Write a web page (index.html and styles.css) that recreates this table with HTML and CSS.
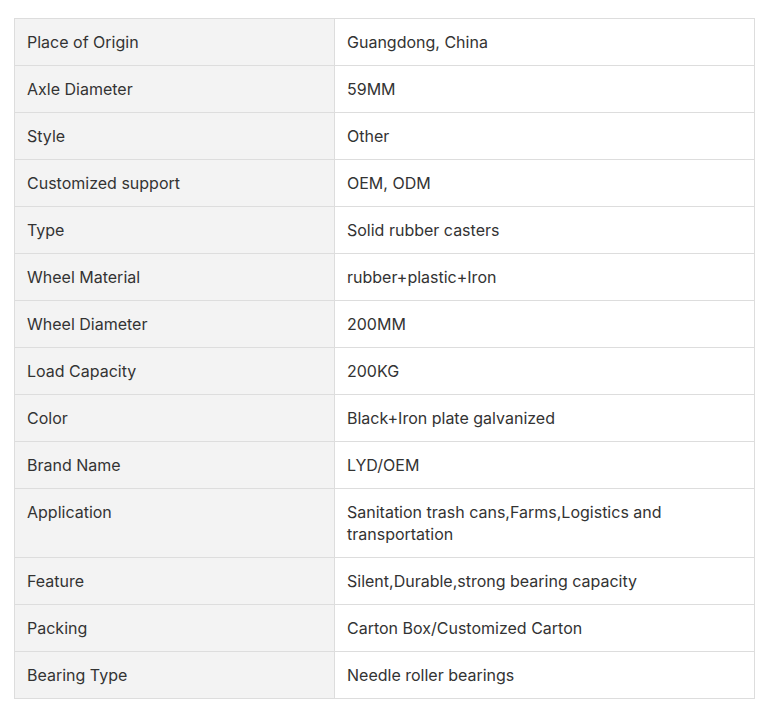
FILE: index.html
```html
<!DOCTYPE html>
<html>
<head>
<meta charset="utf-8">
<link rel="stylesheet" href="styles.css">
</head>
<body>
<table class="spec">
<tbody>
<tr><td class="k">Place of Origin</td><td class="v">Guangdong, China</td></tr>
<tr><td class="k">Axle Diameter</td><td class="v">59MM</td></tr>
<tr><td class="k">Style</td><td class="v">Other</td></tr>
<tr><td class="k">Customized support</td><td class="v">OEM, ODM</td></tr>
<tr><td class="k">Type</td><td class="v">Solid rubber casters</td></tr>
<tr><td class="k">Wheel Material</td><td class="v">rubber+plastic+Iron</td></tr>
<tr><td class="k">Wheel Diameter</td><td class="v">200MM</td></tr>
<tr><td class="k">Load Capacity</td><td class="v">200KG</td></tr>
<tr><td class="k">Color</td><td class="v">Black+Iron plate galvanized</td></tr>
<tr><td class="k">Brand Name</td><td class="v">LYD/OEM</td></tr>
<tr><td class="k">Application</td><td class="v">Sanitation trash cans,Farms,Logistics and transportation</td></tr>
<tr><td class="k">Feature</td><td class="v">Silent,Durable,strong bearing capacity</td></tr>
<tr><td class="k">Packing</td><td class="v">Carton Box/Customized Carton</td></tr>
<tr><td class="k">Bearing Type</td><td class="v">Needle roller bearings</td></tr>
</tbody>
</table>
</body>
</html>
```
FILE: styles.css
```css
html, body {
  margin: 0;
  padding: 0;
  background: #fff;
}
body {
  padding: 18px 18px 0 14px;
  font-family: Inter, "Noto Sans", sans-serif;
  font-size: 16px;
  line-height: 22px;
  color: #333;
}
.spec {
  width: 741px;
  border-collapse: collapse;
  table-layout: fixed;
}
.spec td {
  border: 1px solid #dddddd;
  padding: 12px 12px;
  vertical-align: top;
  text-align: left;
}
.spec td.k {
  width: 295px;
  background: #f3f3f3;
}
.spec td.v {
  background: #fff;
}
```
